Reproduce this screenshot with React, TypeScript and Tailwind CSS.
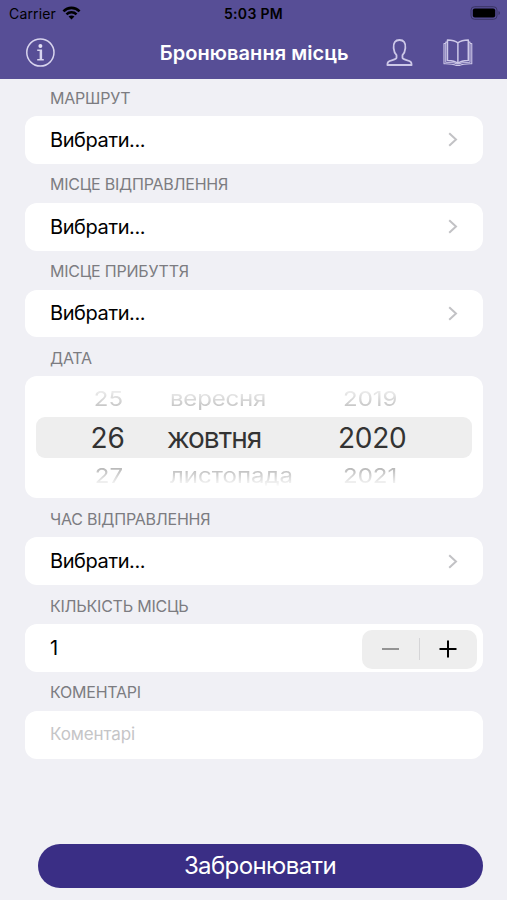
import type { ReactNode } from "react";

const Section = ({ title, children }: { title: string; children: ReactNode }) => {
    return (
        <section>
            <h2 className="flex h-[39px] items-center pt-[2px] pl-[50px] text-[16px] tracking-[-0.22px] text-[#7c7c81]">{title}</h2>
            {children}
        </section>
    );
};

const SelectRow = () => {
    return (
        <button className="mx-[25px] flex h-[47.75px] w-[457.5px] items-center justify-between rounded-[12px] bg-white pr-[25px] pl-[25px] text-[20px] tracking-[-0.4px] text-black">
            <span>Вибрати...</span>
            <svg className="h-[15px] w-[10px]" viewBox="0 0 10 15" fill="none" stroke="#c2c2c5" strokeWidth="2">
                <path d="M1.2 1.2 8 7.5 1.2 13.8" />
            </svg>
        </button>
    );
};

const StatusBar = () => {
    return (
        <div className="grid h-[27px] grid-cols-3 items-center pr-[6px] pl-[9px] text-[14px] text-black">
            <div className="flex items-center gap-[6px]">
                <span className="tracking-[0.15px]">Carrier</span>
                <svg className="-mt-[2px] h-[14px] w-[19px]" viewBox="0 0 20 14" fill="none" stroke="black" strokeWidth="2.7">
                    <path d="M1.5 5.2C6.2.4 13.8.4 18.5 5.2" />
                    <path d="M4.7 8.4C7.7 5.5 12.3 5.5 15.3 8.4" />
                    <path d="M10 13.8 6.9 10.7C8.6 9.2 11.4 9.2 13.1 10.7Z" fill="black" stroke="none" />
                </svg>
            </div>
            <span className="-ml-[3px] text-center font-semibold tracking-[0.3px]">5:03 PM</span>
            <svg className="-mt-[2px] h-[14px] w-[31px] justify-self-end" viewBox="0 0 31 14">
                <rect x="1" y=".7" width="26" height="12.6" rx="3.5" fill="none" stroke="#3b3565" />
                <rect x="2.8" y="2.5" width="22.4" height="9" rx="2" fill="black" />
                <path d="M28.5 5v4q1.5-.6 1.5-2t-1.5-2" fill="#3b3565" />
            </svg>
        </div>
    );
};

const DatePicker = () => {
    return (
        <div className="mx-[25px] flex h-[122px] w-[457.5px] flex-col rounded-[12px] bg-white px-[11px] pt-[10px]">
            <div className="mb-[5px] grid h-[26px] grid-cols-[87px_147px_1fr] items-center mask-linear-0 mask-linear-from-20% mask-linear-to-110% text-[24px] leading-none text-[#c6c6c6]">
                <span className="scale-y-85 text-right">25</span>
                <span className="scale-y-85 pl-[47px] tracking-[-0.2px]">вересня</span>
                <span className="scale-y-85 pl-[73px]">2019</span>
            </div>
            <div className="grid h-[41px] grid-cols-[89px_145px_1fr] items-center rounded-[9px] bg-[#eeeeee] pb-[2px] text-[28px] text-[#333333]">
                <span className="text-right">26</span>
                <span className="pl-[42px] tracking-[-1px]">жовтня</span>
                <span className="pl-[68px] tracking-[-0.3px]">2020</span>
            </div>
            <div className="grid h-[36px] grid-cols-[87px_147px_1fr] items-center mask-linear-180 mask-linear-from-25% mask-linear-to-80% text-[24px] leading-none text-[#b4b4b4]">
                <span className="scale-y-85 text-right">27</span>
                <span className="scale-y-85 pl-[47px]">листопада</span>
                <span className="scale-y-85 pl-[73px]">2021</span>
            </div>
        </div>
    );
};

const App = () => {
    return (
        <div className="flex h-[900px] w-[507px] flex-col overflow-hidden bg-[#f0f0f5] font-['Inter','Liberation_Sans',sans-serif]">
            <header className="h-[79px] shrink-0 bg-[#574e96]">
                <StatusBar />
                <nav className="flex h-[52px] items-center pr-[33px] pl-[25px]">
                    <svg className="h-[30px] w-[30px]" viewBox="0 0 30 30" fill="none" stroke="#d8d4ee" strokeWidth="1.5">
                        <circle cx="15.5" cy="14.5" r="13.7" />
                        <circle cx="15.5" cy="8" r="2" fill="#e4e1f5" stroke="none" />
                        <path d="M12.3 12.2h4.2v9.2M12.3 21.8h6.6" />
                        <path d="M15.9 12.2v9.6" strokeWidth="2.3" />
                    </svg>
                    <h1 className="-mt-px ml-[105px] w-[191px] text-[20px] font-semibold tracking-[0.05px] whitespace-nowrap text-white">Бронювання місць</h1>
                    <svg className="ml-[36px] h-[30px] w-[28px]" viewBox="0 0 28 30" fill="none" stroke="#cdc8e8" strokeWidth="1.8" strokeLinejoin="round">
                        <path d="M11.6 17.2v2.6c0 2.1-6.5 2.3-8.3 4.2-.7.8-.9 2-.9 3.100h24.400c0-1.100-.2-2.300-.9-3.100-1.800-1.900-8.300-2.100-8.300-4.200v-2.600c1.700-1.600 2.600-4.200 2.900-7.100.5-5.300-1.700-8.200-5.900-8.200s-6.400 2.900-5.900 8.200c.3 2.900 1.200 5.500 2.900 7.100Z" />
                    </svg>
                    <svg className="ml-[29px] h-[30px] w-[32px]" viewBox="0 0 32 30" fill="none" stroke="#cdc8e8" strokeWidth="1.5" strokeLinejoin="round">
                        <path d="M16 4.800C13.300 2.700 9.500 2 5.500 2v20.500c4.100-.1 7.800.7 10.500 2.800 2.700-2.100 6.400-2.900 10.500-2.800V2c-4 0-7.800.7-10.500 2.800Zm0 0v20.500" />
                        <path d="M5.500 4H3.800v20.300c4.200 0 8.200.2 10.700 1.500h3c2.500-1.300 6.500-1.500 10.700-1.500V4h-1.700" strokeWidth="1.100" />
                        <path d="M3.800 5.500H2v20.300c4.200 0 9.200-.2 12 1.700h4c2.800-1.900 7.800-1.700 12-1.700V5.500h-1.800" strokeWidth="1.100" />
                    </svg>
                </nav>
            </header>
            <main className="-mt-[2px]">
                <Section title="МАРШРУТ">
                    <SelectRow />
                </Section>
                <Section title="МІСЦЕ ВІДПРАВЛЕННЯ">
                    <SelectRow />
                </Section>
                <Section title="МІСЦЕ ПРИБУТТЯ">
                    <SelectRow />
                </Section>
                <Section title="ДАТА">
                    <DatePicker />
                </Section>
                <Section title="ЧАС ВІДПРАВЛЕННЯ">
                    <SelectRow />
                </Section>
                <Section title="КІЛЬКІСТЬ МІСЦЬ">
                    <div className="mx-[25px] flex h-[47.75px] w-[457.5px] items-center justify-between rounded-[12px] bg-white pr-[6px] pl-[25px] text-[20px] text-black">
                        <span>1</span>
                        <div className="mt-[3px] flex h-[39px] w-[115px] items-center rounded-[10px] bg-[#eeeeee]">
                            <button className="flex flex-1 justify-center" aria-label="minus">
                                <span className="h-[2px] w-[17px] bg-[#949494]" />
                            </button>
                            <span className="h-[22px] w-px bg-[#d5d5d7]" />
                            <button className="flex flex-1 justify-center" aria-label="plus">
                                <svg className="h-[18px] w-[18px]" viewBox="0 0 18 18" stroke="black" strokeWidth="2">
                                    <path d="M.5 9h17M9 .5v17" />
                                </svg>
                            </button>
                        </div>
                    </div>
                </Section>
                <Section title="КОМЕНТАРІ">
                    <div className="mx-[25px] flex h-[47.75px] w-[457.5px] items-center rounded-[12px] bg-white pl-[25px] text-[17px] tracking-[-0.1px] text-[#c5c5c7]">
                        Коментарі
                    </div>
                </Section>
            </main>
            <button className="mt-auto mb-[12px] ml-[37.5px] h-[44px] w-[445px] shrink-0 rounded-full bg-[#3a2e85] text-[24px] tracking-[-0.6px] text-white">
                Забронювати
            </button>
        </div>
    );
};

export default App;
